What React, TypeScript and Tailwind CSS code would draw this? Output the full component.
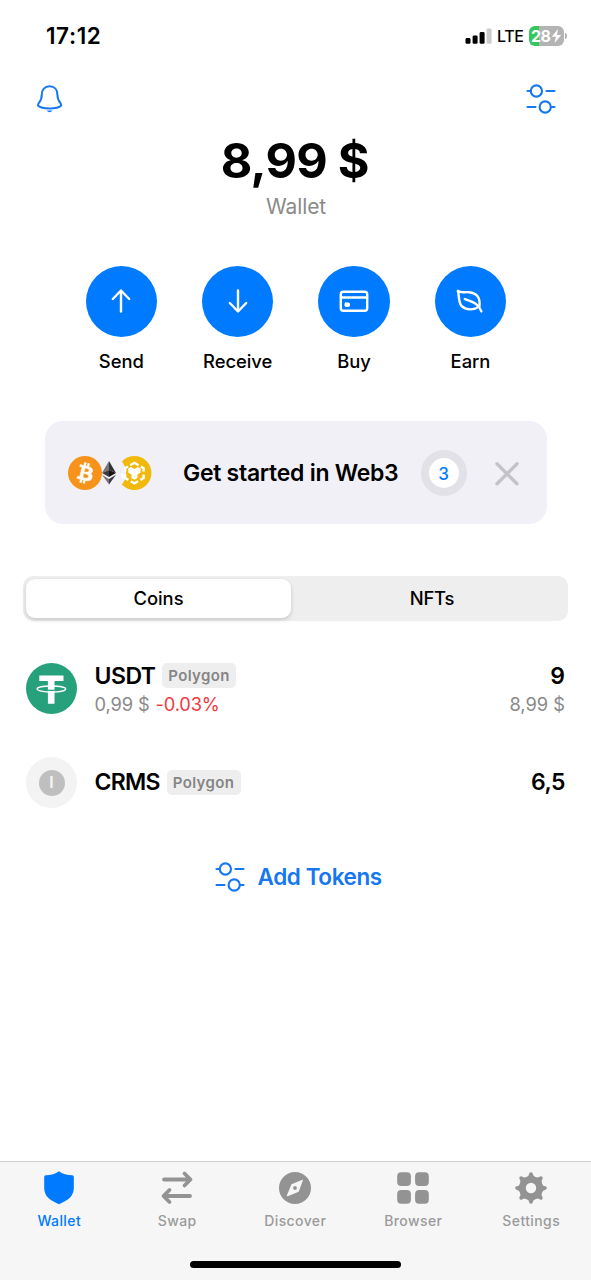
import type { ReactNode } from 'react';

function Sliders() {
  return (
    <svg width="30" height="32" viewBox="0 0 30 32" fill="none" stroke="#1677f2" strokeWidth="2.1" strokeLinecap="round">
      <circle cx="10.4" cy="8" r="5.6" />
      <path d="M1.5 8H4.5M20.5 8H28.5M1.5 24H9.5M25.5 24H28.5" />
      <circle cx="19.2" cy="24" r="5.6" />
    </svg>
  );
}

function Bell() {
  return (
    <svg width="26" height="30" viewBox="0 0 26 30" fill="none" stroke="#1677f2" strokeWidth="2" strokeLinecap="round" strokeLinejoin="round">
      <path d="M12.6 2.2C7.6 2.2 4.8 5.8 4.8 10.4C4.8 15 4 16.4 1.9 18.8C1 20 0.9 21 1.2 21.8C3 23.6 7.6 24.5 12.6 24.5C17.6 24.5 22.2 23.6 24 21.8C24.3 21 24.2 20 23.3 18.8C21.2 16.4 20.4 15 20.4 10.4C20.4 5.8 17.6 2.2 12.6 2.2Z" />
      <path d="M9.6 26.4H15.6Q12.6 30 9.6 26.4Z" fill="#1677f2" stroke="none" />
    </svg>
  );
}

function Action({ label, children }: { label: string; children: ReactNode }) {
  return (
    <div className="flex w-[116.4px] flex-col items-center">
      <div className="flex h-[71.5px] w-[71.5px] items-center justify-center rounded-full bg-[#007aff]">
        <svg width="36" height="36" viewBox="0 0 36 36" fill="none" stroke="#fff" strokeWidth="2.4" strokeLinecap="round" strokeLinejoin="round">
          {children}
        </svg>
      </div>
      <span className="mt-[12px] text-[18.4px] leading-6 font-medium tracking-[-0.05px]">{label}</span>
    </div>
  );
}

function Bitcoin() {
  return (
    <svg className="z-10" width="34" height="34" viewBox="0 0 32 32">
      <circle cx="16" cy="16" r="16" fill="#f7931a" />
      <path
        fill="#fff"
        stroke="#fff"
        strokeWidth="0.4"
        d="M23.189 14.02c.314-2.096-1.283-3.223-3.465-3.975l.708-2.84-1.728-.43-.69 2.765c-.454-.114-.92-.22-1.385-.326l.695-2.783L15.596 6l-.708 2.839c-.376-.086-.746-.17-1.104-.26l.002-.009-2.384-.595-.46 1.846s1.283.294 1.256.312c.7.175.826.638.805 1.006l-.806 3.235c.048.012.11.03.18.057l-.183-.045-1.13 4.532c-.086.212-.303.531-.793.41.018.025-1.256-.313-1.256-.313l-.858 1.978 2.25.561c.418.105.828.215 1.231.318l-.715 2.872 1.727.43.708-2.84c.472.127.93.245 1.378.357l-.706 2.828 1.728.43.715-2.866c2.948.558 5.164.333 6.097-2.333.752-2.146-.037-3.385-1.588-4.192 1.13-.26 1.98-1.003 2.207-2.538zm-3.95 5.538c-.533 2.147-4.148.986-5.32.695l.95-3.805c1.172.293 4.929.872 4.37 3.11zm.535-5.569c-.487 1.953-3.495.96-4.47.717l.86-3.45c.975.243 4.118.696 3.61 2.733z"
      />
    </svg>
  );
}

function EthBnb() {
  return (
    <svg className="-ml-[10px]" width="60" height="36" viewBox="0 0 60 36">
      <circle cx="42.4" cy="18" r="17" fill="#f0b90b" />
      <circle cx="17" cy="18" r="17.2" fill="#f1f0f6" />
      <g fill="none" stroke="#fff" strokeWidth="2.4">
        <path d="M38.2 10.2L42.4 7.8L46.6 10.2M48.8 11.5L51.6 13.1V16.6M51.6 19.4V23.1L48.4 24.9M46 26.2L42.4 28.3L38.8 26.2M36.4 24.9L33.2 23.1V19.4M33.2 16.6V13.1L36 11.5" />
      </g>
      <path d="M36.2 13.6L39 12L42.4 14L45.8 12L48.6 13.6V17.6L45.4 19.4V23L42.4 24.8L39.4 23V19.4L36.2 17.6Z" fill="#fff" />
      <path d="M29.5 17.5L33 19.5V24L29 22Z" fill="#fff" />
      <path d="M17 6L10 18L17 15Z" fill="#77777b" />
      <path d="M17 6L24 18L17 15Z" fill="#343435" />
      <path d="M10 18L17 15V22Z" fill="#3c3c3f" />
      <path d="M24 18L17 15V22Z" fill="#151515" />
      <path d="M10 19.8L17 24V29.5Z" fill="#77777b" />
      <path d="M24 19.8L17 24V29.5Z" fill="#3c3c3d" />
    </svg>
  );
}

function Badge() {
  return (
    <span className="flex h-[25px] w-[74px] items-center justify-center rounded-[5px] bg-[#eeeeee] text-[15px] leading-none font-semibold tracking-[0.35px] text-[#858585]">
      Polygon
    </span>
  );
}

function Tab({ label, active, children }: { label: string; active?: boolean; children: ReactNode }) {
  return (
    <div className={active ? 'flex flex-1 flex-col items-center text-[#007aff]' : 'flex flex-1 flex-col items-center text-[#939393]'}>
      <svg width="36" height="36" viewBox="0 0 36 36" fill="currentColor">
        {children}
      </svg>
      <span className={active ? 'mt-[5.5px] pl-[0.5px] text-[14px] leading-[18px] font-medium tracking-[0.4px]' : 'mt-[5.5px] pl-[0.5px] text-[14px] leading-[18px] font-medium tracking-[0.4px] text-[#9b9b9b]'}>
        {label}
      </span>
    </div>
  );
}

export default function App() {
  const teeth = [0, 45, 90, 135, 180, 225, 270, 315];
  return (
    <div className="flex h-[1280px] w-[591px] flex-col overflow-hidden bg-white font-['Inter',sans-serif] text-black">
      <header className="flex h-[72px] items-center justify-between pr-[24px] pl-[46px]">
        <span className="text-[22.5px] font-semibold tracking-[0.6px]">17:12</span>
        <div className="flex items-center">
          <svg width="27" height="18" viewBox="0 0 27 18">
            <rect x="0.5" y="11" width="5" height="5.8" rx="1.4" />
            <rect x="7.6" y="8.4" width="5" height="8.4" rx="1.4" />
            <rect x="14.6" y="5" width="5" height="11.8" rx="1.4" />
            <rect x="21.6" y="1.4" width="5" height="15.4" rx="1.4" fill="#cccccc" />
          </svg>
          <span className="ml-[5px] w-[26px] text-[16px] leading-none font-medium tracking-[-0.4px]">LTE</span>
          <div className="ml-[6px] flex h-5 w-[34.5px] items-center justify-center rounded-[6px] bg-linear-to-r from-[#34c759] from-28% to-[#b3b3b3] to-28% text-white">
            <span className="text-[16px] leading-none font-bold tracking-[-0.4px]">28</span>
            <svg width="11" height="14" viewBox="0 0 10 13">
              <path d="M6.4 0L0.6 7.3H4.4L3.2 13L9.4 5.5H5.5Z" fill="#fff" />
            </svg>
          </div>
          <div className="ml-[1.5px] h-[6px] w-[2px] rounded-r-full bg-[#b3b3b3]" />
        </div>
      </header>

      <div className="flex h-[54px] items-center justify-between pr-[35px] pl-[37px]">
        <Bell />
        <Sliders />
      </div>

      <section className="flex flex-col items-center">
        <h1 className="mt-[9px] h-[52px] pr-[1.5px] text-[48.5px] leading-[52px] font-bold tracking-[-0.7px]">8,99 $</h1>
        <p className="mt-[8px] h-6 pl-px text-[21px] leading-6 tracking-[-0.1px] text-[#8a8a8a]">Wallet</p>
      </section>

      <section className="mt-[46.5px] flex justify-center pl-[0.8px]">
        <Action label="Send">
          <path d="M18 28.5V8M9.8 16L18 7.5L26.2 16" />
        </Action>
        <Action label="Receive">
          <path d="M18 7.5V28M9.8 20L18 28.5L26.2 20" />
        </Action>
        <Action label="Buy">
          <rect x="4.8" y="8.7" width="26.4" height="19" rx="2.5" />
          <path d="M5 14.5H31" />
          <rect x="9" y="20" width="4.4" height="3.4" rx="0.6" fill="#fff" strokeWidth="1" />
        </Action>
        <Action label="Earn">
          <path d="M5.8 7.8C9 10.4 12.5 8.8 17 9.2C25 9.9 28.6 15 27.4 23.4C22.6 27 14.6 27.6 10 23.4C6 19.6 7.6 13 5.8 7.8Z" />
          <path d="M12.8 16C17.8 18.4 26 19 29.4 28.4" />
        </Action>
      </section>

      <section className="mx-[44.5px] mt-[48px] flex h-[103px] items-center rounded-[18px] bg-[#f1f0f6] pl-[23px]">
        <Bitcoin />
        <EthBnb />
        <span className="ml-[31.5px] w-[215.5px] text-[23px] leading-7 font-semibold tracking-[-0.28px] whitespace-nowrap">Get started in Web3</span>
        <div className="ml-[22px] flex h-[46px] w-[46px] items-center justify-center rounded-full border-8 border-[#e2e1e7] bg-white pt-[3px] text-[17px] leading-5 font-medium text-[#007aff]">3</div>
        <svg className="ml-[27px]" width="26" height="26" viewBox="0 0 26 26" stroke="#c4c4c8" strokeWidth="3.4" strokeLinecap="round">
          <path d="M3 3.8L23 23.8M23 3.8L3 23.8" />
        </svg>
      </section>

      <section className="mx-[23px] mt-[51.5px] flex h-[45.5px] rounded-[10px] bg-[#eeeeee] p-[3px] text-[18.4px] font-medium">
        <div className="flex w-[265px] items-center justify-center rounded-[9px] bg-white pt-[1.5px] shadow-[0_2px_4px_rgba(0,0,0,0.16)]">Coins</div>
        <div className="flex flex-1 items-center justify-center pt-[1.5px] pl-[8px] tracking-[-0.2px]">NFTs</div>
      </section>

      <section className="mt-[36.5px] flex h-[62px] items-center pr-[26px] pl-[26px]">
        <svg width="51" height="51" viewBox="0 0 51 51">
          <circle cx="25.5" cy="25.5" r="25.5" fill="#26a17b" />
          <path d="M13.3 12.4H37.5V17.9H28.5V40.8H21.9V17.9H13.3Z" fill="#fff" />
          <ellipse cx="25.4" cy="26" rx="14.3" ry="3" fill="none" stroke="#fff" strokeWidth="1.3" />
          <path d="M21.8 27.2Q25.5 27.6 28.6 27.2" fill="none" stroke="#26a17b" strokeWidth="1.2" />
        </svg>
        <div className="ml-[17.5px] flex flex-1 flex-col">
          <div className="flex h-[30px] items-center">
            <span className="w-[67.5px] pt-[2px] text-[23px] font-semibold tracking-[-0.5px]">USDT</span>
            <Badge />
          </div>
          <div className="flex h-[26px] items-center pt-[2.5px] text-[18.3px] text-[#8a8a8a]">
            <span className="w-[61px] tracking-[-0.1px]">0,99 $</span>
            <span className="tracking-[-0.15px] text-[#f03a3e]">-0.03%</span>
          </div>
        </div>
        <div className="flex flex-col items-end">
          <span className="h-[30px] text-[23px] leading-[30px] font-semibold">9</span>
          <span className="h-[26px] text-[18.3px] leading-[26px] text-[#8a8a8a]">8,99 $</span>
        </div>
      </section>

      <section className="mt-[32px] flex h-[62px] items-center pr-[26px] pl-[26px]">
        <div className="flex h-[51px] w-[51px] items-center justify-center rounded-full bg-[#f3f3f3]">
          <div className="flex h-[26px] w-[26px] items-center justify-center rounded-full bg-[#bfbfbf] pt-px text-[15.5px] leading-none font-bold text-[#f3f3f3]">I</div>
        </div>
        <div className="ml-[17.5px] flex flex-1 items-center">
          <span className="w-[72px] text-[23px] font-semibold tracking-[-0.7px]">CRMS</span>
          <Badge />
        </div>
        <span className="text-[23px] font-semibold tracking-[-0.5px]">6,5</span>
      </section>

      <section className="mt-[45px] flex h-[36px] items-center pl-[215px] text-[#1677f2]">
        <Sliders />
        <span className="ml-[12.5px] pt-px text-[22.5px] font-semibold tracking-[-0.4px]">Add Tokens</span>
      </section>

      <nav className="mt-auto flex h-[119.5px] flex-col border-t-[1.5px] border-[#d0d0d0] bg-[#f6f6f6]">
        <div className="flex pt-[8.5px] pr-[1px]">
          <Tab label="Wallet" active>
            <path d="M18 1.2C21.5 4 26 5.3 31.2 5.3Q32.8 5.4 32.8 7V18C32.8 26.5 26.5 30.5 18 34.2C9.5 30.5 3.2 26.5 3.2 18V7Q3.2 5.4 4.8 5.3C10 5.3 14.5 4 18 1.2Z" />
          </Tab>
          <Tab label="Swap">
            <path d="M5 9.5H31M25.5 3.5L31.5 9.5L25.5 15.5M31 26H5M10.5 20L4.5 26L10.5 32" fill="none" stroke="currentColor" strokeWidth="3.8" strokeLinecap="round" strokeLinejoin="round" />
          </Tab>
          <Tab label="Discover">
            <path fillRule="evenodd" d="M18 2A16 16 0 1 1 18 34A16 16 0 1 1 18 2ZM26 10Q26.2 9.4 25.5 9.8L14.5 14.2L9.8 25.5Q9.7 26.5 10.7 26.2L21.7 21.7Z" />
            <circle cx="18" cy="18" r="1.9" />
          </Tab>
          <Tab label="Browser">
            <rect x="2.2" y="2.2" width="13.7" height="13.7" rx="4" />
            <rect x="20.1" y="2.2" width="13.7" height="13.7" rx="4" />
            <rect x="2.2" y="20.1" width="13.7" height="13.7" rx="4" />
            <rect x="20.1" y="20.1" width="13.7" height="13.7" rx="4" />
          </Tab>
          <Tab label="Settings">
            <circle cx="18" cy="18" r="8.6" fill="none" stroke="currentColor" strokeWidth="6.8" />
            {teeth.map((a) => (
              <path key={a} transform={`rotate(${a} 18 18)`} d="M13.4 7.5Q16 6 16.3 3.5Q16.6 2.2 18 2.2Q19.4 2.2 19.7 3.5Q20 6 22.6 7.5Z" />
            ))}
          </Tab>
        </div>
        <div className="mx-auto mt-[31.5px] h-[7px] w-[211px] rounded-full bg-black" />
      </nav>
    </div>
  );
}
